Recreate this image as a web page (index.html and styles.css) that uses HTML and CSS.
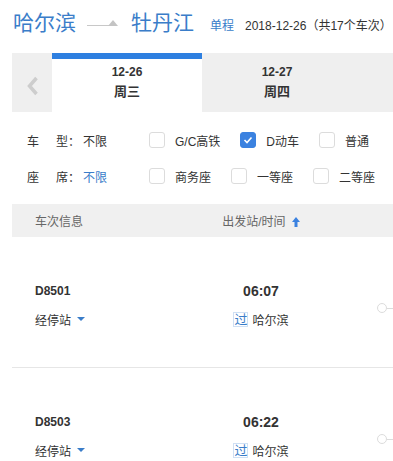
FILE: index.html
```html
<!DOCTYPE html>
<html lang="zh-CN">

<head>
    <meta charset="UTF-8">
    <meta name="viewport" content="width=device-width, initial-scale=1.0">
    <title>车次列表</title>
    <link rel="stylesheet" href="styles.css">
</head>

<body>
    <div class="page">
        <div class="route">
            <span class="city">哈尔滨</span>
            <svg class="route-arrow" width="32" height="10" viewBox="0 0 32 10">
                <line x1="0" y1="8.5" x2="23" y2="8.5" stroke="#c8c8c8" stroke-width="1" />
                <polygon points="21,9 26,3 31,9" fill="#c4c4c4" />
            </svg>
            <span class="city">牡丹江</span>
            <span class="trip-type">单程</span>
            <span class="trip-date">2018-12-26（共17个车次）</span>
        </div>

        <div class="days">
            <div class="day-prev">
                <svg width="13" height="20" viewBox="0 0 13 20">
                    <polyline points="10.5,2 3.5,10 10.5,18" fill="none" stroke="#cdcdcd" stroke-width="3.5" />
                </svg>
            </div>
            <div class="day active">
                <div class="day-date">12-26</div>
                <div class="day-week">周三</div>
            </div>
            <div class="day">
                <div class="day-date">12-27</div>
                <div class="day-week">周四</div>
            </div>
        </div>

        <div class="filters">
            <div class="filter-row">
                <div class="filter-key"><span class="key-first">车</span>型：<span class="filter-val">不限</span></div>
                <div class="filter-opts">
                    <div class="opt"><span class="box"></span>G/C高铁</div>
                    <div class="opt"><span class="box checked">
                            <svg width="10" height="8" viewBox="0 0 10 8">
                                <polyline points="1.5,4 4,6.5 8.5,1.5" fill="none" stroke="#fff" stroke-width="1.6" />
                            </svg>
                        </span>D动车</div>
                    <div class="opt"><span class="box"></span>普通</div>
                </div>
            </div>
            <div class="filter-row">
                <div class="filter-key"><span class="key-first">座</span>席：<span class="filter-val blue">不限</span></div>
                <div class="filter-opts">
                    <div class="opt"><span class="box"></span>商务座</div>
                    <div class="opt"><span class="box"></span>一等座</div>
                    <div class="opt"><span class="box"></span>二等座</div>
                </div>
            </div>
        </div>

        <div class="list-head">
            <div>车次信息</div>
            <div class="sort">出发站/时间
                <svg class="sort-arrow" width="8" height="10" viewBox="0 0 8 10">
                    <polygon points="4,0 8,5 5.5,5 5.5,10 2.5,10 2.5,5 0,5" fill="#3b82e0" />
                </svg>
            </div>
        </div>

        <div class="train">
            <div class="train-no">D8501</div>
            <div class="train-time">06:07</div>
            <div class="train-track"><span class="dot"></span><span class="tail"></span></div>
            <div class="stops">经停站<span class="caret"></span></div>
            <div class="station"><span class="pass">过</span>哈尔滨</div>
        </div>

        <div class="train">
            <div class="train-no">D8503</div>
            <div class="train-time">06:22</div>
            <div class="train-track"><span class="dot"></span><span class="tail"></span></div>
            <div class="stops">经停站<span class="caret"></span></div>
            <div class="station"><span class="pass">过</span>哈尔滨</div>
        </div>
    </div>
</body>

</html>
```

FILE: styles.css
```css
* {
    padding: 0;
    margin: 0;
    box-sizing: border-box;
}

body {
    background-color: #fff;
    font-family: "Liberation Sans", "Noto Sans CJK SC", sans-serif;
    font-size: 12px;
    color: #333;
    overflow: hidden;
}

.page {
    padding-left: 12px;
}

/* 顶部线路 */
.route {
    height: 53px;
    display: flex;
    align-items: baseline;
    padding-top: 9px;
    padding-left: 1px;
    white-space: nowrap;
}

.city {
    font-size: 21px;
    line-height: 28px;
    color: #3a7dc9;
}

.route-arrow {
    align-self: flex-start;
    margin: 8px 12px 0 11px;
}

.trip-type {
    margin-left: 16px;
    font-size: 12px;
    color: #3a7dc9;
}

.trip-date {
    margin-left: 11px;
    font-size: 12px;
    color: #333;
}

/* 日期切换 */
.days {
    display: flex;
    height: 59px;
    background-color: #efefef;
}

.day-prev {
    width: 40px;
    display: flex;
    align-items: center;
    justify-content: center;
    padding-top: 6px;
}

.day {
    width: 150px;
    border-top: 6px solid transparent;
    padding-top: 5px;
    text-align: center;
    font-weight: bold;
    color: #333;
}

.day.active {
    background-color: #fff;
    border-top-color: #2e7fe0;
}

.day-date {
    font-size: 12px;
    line-height: 16px;
}

.day-week {
    margin-top: 2px;
    font-size: 13px;
    line-height: 20px;
}

/* 筛选 */
.filters {
    padding: 10px 0 10px 15px;
}

.filter-row {
    height: 36px;
    display: flex;
    align-items: center;
}

.filter-key {
    width: 122px;
    white-space: nowrap;
}

.key-first {
    display: inline-block;
    width: 29px;
}

.filter-val {
    margin-left: 3px;
}

.filter-val.blue {
    color: #3a7dc9;
}

.filter-opts {
    display: flex;
    gap: 20px;
}

.opt {
    display: flex;
    align-items: center;
    white-space: nowrap;
}

.box {
    width: 16px;
    height: 16px;
    border: 1px solid #dcdcdc;
    border-radius: 3px;
    margin-right: 10px;
    display: flex;
    align-items: center;
    justify-content: center;
}

.box.checked {
    background-color: #3b82e0;
    border-color: #3b82e0;
}

/* 列表 */
.list-head {
    height: 33px;
    background-color: #f0f0f0;
    display: grid;
    grid-template-columns: 166px 120px 1fr;
    align-items: center;
    padding-left: 23px;
    color: #666;
}

.sort {
    text-align: center;
    white-space: nowrap;
}

.sort-arrow {
    margin-left: 3px;
    vertical-align: -1px;
}

.train {
    display: grid;
    grid-template-columns: 166px 120px 1fr;
    grid-template-rows: 18px 18px;
    row-gap: 10px;
    align-items: center;
    padding: 45px 0 39px 23px;
    border-bottom: 1px solid #e6e6e6;
}

.train-no {
    font-weight: bold;
    font-size: 12px;
}

.train-time {
    font-weight: bold;
    font-size: 14px;
    text-align: center;
}

.train-track {
    grid-column: 3;
    grid-row: 1 / span 2;
    justify-self: end;
    display: flex;
    align-items: center;
    margin-top: 6px;
}

.dot {
    width: 10px;
    height: 10px;
    border: 1px solid #dcdcdc;
    border-radius: 50%;
}

.tail {
    width: 6px;
    height: 1px;
    background-color: #dcdcdc;
}

.stops {
    display: flex;
    align-items: center;
}

.caret {
    margin-left: 6px;
    border-left: 4px solid transparent;
    border-right: 4px solid transparent;
    border-top: 4px solid #3a7dc9;
}

.station {
    display: flex;
    align-items: center;
    justify-content: center;
}

.pass {
    width: 15px;
    height: 15px;
    border: 1px solid #cfe0f4;
    color: #3a7dc9;
    font-size: 13px;
    line-height: 13px;
    text-align: center;
    margin-right: 4px;
}
```
